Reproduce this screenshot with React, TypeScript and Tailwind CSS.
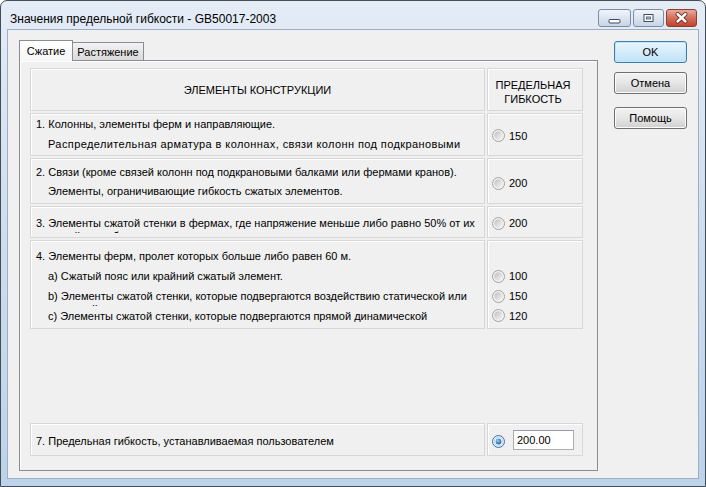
import React from "react";

const cell =
  "border border-[#d7d7d7] shadow-[inset_1px_1px_0_#ffffff] bg-[#f0f0f0] overflow-hidden";

function Radio({ checked = false }: { checked?: boolean }) {
  if (checked) {
    return (
      <svg width="13" height="13" viewBox="0 0 13 13" className="shrink-0">
        <defs>
          <radialGradient id="rb-dot" cx="40%" cy="35%" r="70%">
            <stop offset="0%" stopColor="#8fd3ff" />
            <stop offset="100%" stopColor="#14589a" />
          </radialGradient>
        </defs>
        <circle cx="6.5" cy="6.5" r="6" fill="#e8f2fb" stroke="#3f729f" />
        <circle cx="6.5" cy="6.5" r="4.3" fill="#ffffff" stroke="#a8c8e2" strokeWidth="0.8" />
        <circle cx="6.5" cy="6.5" r="2.9" fill="url(#rb-dot)" />
      </svg>
    );
  }
  return (
    <svg width="13" height="13" viewBox="0 0 13 13" className="shrink-0">
      <defs>
        <linearGradient id="rb-off" x1="0" y1="0" x2="1" y2="1">
          <stop offset="0%" stopColor="#bdbdbd" />
          <stop offset="100%" stopColor="#f8f8f8" />
        </linearGradient>
      </defs>
      <circle cx="6.5" cy="6.5" r="6" fill="#f2f2f2" stroke="#a2a2a2" />
      <circle cx="6.5" cy="6.5" r="4.2" fill="url(#rb-off)" />
    </svg>
  );
}

function RadioOption({ value }: { value: string }) {
  return (
    <div className="flex items-center">
      <Radio />
      <span className="ml-[4px] leading-[14px]">{value}</span>
    </div>
  );
}

function Button({ label, primary = false }: { label: string; primary?: boolean }) {
  return (
    <div
      className={
        primary
          ? "h-[22px] w-[73px] rounded-[3px] border border-[#3c7fb1] bg-gradient-to-b from-[#eaf6fd] to-[#bfe2f7] shadow-[inset_0_0_0_1px_#bfe6fa] flex items-center justify-center"
          : "h-[22px] w-[73px] rounded-[3px] border border-[#707070] bg-gradient-to-b from-[#f3f3f3] via-[#e6e6e6] to-[#d0d0d0] shadow-[inset_0_0_0_1px_#fbfbfb] flex items-center justify-center"
      }
    >
      <span className="leading-[14px]">{label}</span>
    </div>
  );
}

function CaptionButtons() {
  return (
    <div className="ml-auto mr-[8px] mt-[8px] flex gap-[2px]">
      <div className="h-[18px] w-[33px] rounded-[3px] border border-[#7c8ca2] bg-gradient-to-b from-[#f1f5fa] to-[#c7d5e6] flex items-center justify-center">
        <svg width="31" height="16" viewBox="0 0 31 16">
          <rect x="10" y="9.5" width="11" height="3.5" rx="1" fill="#ffffff" stroke="#3b4a5f" />
        </svg>
      </div>
      <div className="h-[18px] w-[31px] rounded-[3px] border border-[#7c8ca2] bg-gradient-to-b from-[#f1f5fa] to-[#c7d5e6] flex items-center justify-center">
        <svg width="29" height="16" viewBox="0 0 29 16">
          <rect x="10" y="4.5" width="9" height="7" fill="#ffffff" stroke="#3b4a5f" />
          <rect x="12.5" y="7" width="4" height="2" fill="#c9d5e4" stroke="#3b4a5f" strokeWidth="0.8" />
        </svg>
      </div>
      <div className="h-[18px] w-[31px] rounded-[3px] border border-[#8a3d31] bg-gradient-to-b from-[#e9a99c] via-[#d16f5c] to-[#c5412a] flex items-center justify-center">
        <svg width="29" height="16" viewBox="0 0 29 16">
          <path d="M10.5 4 L18.5 11.5 M18.5 4 L10.5 11.5" stroke="#5a2118" strokeWidth="4" strokeLinecap="round" />
          <path d="M10.5 4 L18.5 11.5 M18.5 4 L10.5 11.5" stroke="#ffffff" strokeWidth="2.4" strokeLinecap="round" />
        </svg>
      </div>
    </div>
  );
}

export default function App() {
  return (
    <div className="w-[706px] h-[487px] bg-white font-['Liberation_Sans',Arial,sans-serif] text-[11px] text-black">
      <div className="w-[706px] h-[487px] flex flex-col rounded-t-[7px] border border-[#434d59] bg-gradient-to-b from-[#e4ecf6] via-[#cedced] to-[#bdd3ea]">
        {/* title bar */}
        <div className="h-[28px] flex items-start">
          <div className="pl-[9px] pt-[10px] text-[12px] leading-[16px]">
            Значения предельной гибкости - GB50017-2003
          </div>
          <CaptionButtons />
        </div>

        {/* client area */}
        <div className="ml-[6px] w-[692px] h-[450px] border border-[#9bb0c8] bg-[#f0f0f0] flex pt-[10px] pl-[11px]">
          {/* tab control */}
          <div className="w-[579px] flex flex-col">
            <div className="h-[20px] flex items-end">
              <div className="relative z-10 -mb-px h-[21px] w-[54px] border border-b-0 border-[#898c95] bg-gradient-to-b from-white to-[#f6f6f6] flex items-center justify-center">
                <span className="leading-[14px]">Сжатие</span>
              </div>
              <div className="h-[18px] w-[71px] border border-l-0 border-b-0 border-[#898c95] bg-gradient-to-b from-[#f3f3f3] to-[#d9d9d9] flex items-center justify-center">
                <span className="leading-[14px] pt-[1px]">Растяжение</span>
              </div>
            </div>

            <div className="h-[411px] border border-[#898c95] shadow-[inset_1px_1px_0_#ffffff] bg-[#f0f0f0] pl-[10px] pt-[7px]">
              <div className="flex flex-col gap-[2px] whitespace-nowrap">
                {/* header */}
                <div className="flex gap-[2px]">
                  <div className={`${cell} w-[455px] h-[43px] pt-[14px] text-center leading-[14px]`}>
                    ЭЛЕМЕНТЫ КОНСТРУКЦИИ
                  </div>
                  <div className={`${cell} w-[96px] h-[43px] pt-[9px] pr-[4px] text-center leading-[14px]`}>
                    <div>ПРЕДЕЛЬНАЯ</div>
                    <div>ГИБКОСТЬ</div>
                  </div>
                </div>

                {/* row 1 */}
                <div className="flex gap-[2px]">
                  <div className={`${cell} w-[455px] h-[43px] pl-[5px] leading-[20px]`}>
                    <div>1. Колонны, элементы ферм и направляющие.</div>
                    <div className="pl-[12px] tracking-[0.4px]">
                      Распределительная арматура в колоннах, связи колонн под подкрановыми
                    </div>
                  </div>
                  <div className={`${cell} w-[96px] h-[43px] pl-[4px] pt-[2px] flex items-center`}>
                    <RadioOption value="150" />
                  </div>
                </div>

                {/* row 2 */}
                <div className="flex gap-[2px]">
                  <div className={`${cell} w-[455px] h-[46px] pl-[5px] pt-[4px] leading-[19px]`}>
                    <div>2. Связи (кроме связей колонн под подкрановыми балками или фермами кранов).</div>
                    <div className="pl-[12px]">Элементы, ограничивающие гибкость сжатых элементов.</div>
                  </div>
                  <div className={`${cell} w-[96px] h-[46px] pl-[4px] pt-[4px] flex items-center`}>
                    <RadioOption value="200" />
                  </div>
                </div>

                {/* row 3 */}
                <div className="flex gap-[2px]">
                  <div className={`${cell} w-[455px] h-[32px] pl-[5px] pt-[10px]`}>
                    <div className="h-[16px] overflow-hidden leading-[13px]">
                      <div>
                        3. Элементы сжатой стенки в фермах, где напряжение меньше либо равно 50% от их
                      </div>
                      <div>несущей способности</div>
                    </div>
                  </div>
                  <div className={`${cell} w-[96px] h-[32px] pl-[4px] pt-[2px] flex items-center`}>
                    <RadioOption value="200" />
                  </div>
                </div>

                {/* row 4 */}
                <div className="flex gap-[2px]">
                  <div className={`${cell} w-[455px] h-[89px] pl-[5px] pt-[6px]`}>
                    <div className="h-[19px] leading-[18px]">
                      4. Элементы ферм, пролет которых больше либо равен 60 м.
                    </div>
                    <div className="pl-[12px] leading-[20px]">
                      <div className="h-[20px]">a) Сжатый пояс или крайний сжатый элемент.</div>
                      <div className="h-[20px] overflow-hidden leading-[13px] pt-[4px]">
                        <div>
                          b) Элементы сжатой стенки, которые подвергаются воздействию статической или
                        </div>
                        <div>нагрузкой</div>
                      </div>
                      <div className="h-[20px]">
                        c) Элементы сжатой стенки, которые подвергаются прямой динамической
                      </div>
                    </div>
                  </div>
                  <div className={`${cell} w-[96px] h-[89px] pl-[4px] pt-[6px]`}>
                    <div className="h-[19px]" />
                    <div className="h-[20px] flex items-center">
                      <RadioOption value="100" />
                    </div>
                    <div className="h-[20px] flex items-center">
                      <RadioOption value="150" />
                    </div>
                    <div className="h-[19px] flex items-center">
                      <RadioOption value="120" />
                    </div>
                  </div>
                </div>

                {/* row 7 */}
                <div className="mt-[92px] flex gap-[2px]">
                  <div className={`${cell} w-[455px] h-[33px] pl-[5px] pt-[2px] flex items-center leading-[14px]`}>
                    7. Предельная гибкость, устанавливаемая пользователем
                  </div>
                  <div className={`${cell} w-[96px] h-[33px] pl-[4px] flex items-center`}>
                    <div className="mt-[3px]">
                      <Radio checked />
                    </div>
                    <div className="ml-[8px] h-[20px] w-[61px] border border-[#abadb3] border-t-[#9a9ca4] bg-white pl-[3px] flex items-center leading-[14px]">
                      200.00
                    </div>
                  </div>
                </div>
              </div>
            </div>
          </div>

          {/* buttons */}
          <div className="ml-[16px] mt-[1px] flex flex-col">
            <Button label="OK" primary />
            <div className="mt-[9px]">
              <Button label="Отмена" />
            </div>
            <div className="mt-[13px]">
              <Button label="Помощь" />
            </div>
          </div>
        </div>
      </div>
    </div>
  );
}
